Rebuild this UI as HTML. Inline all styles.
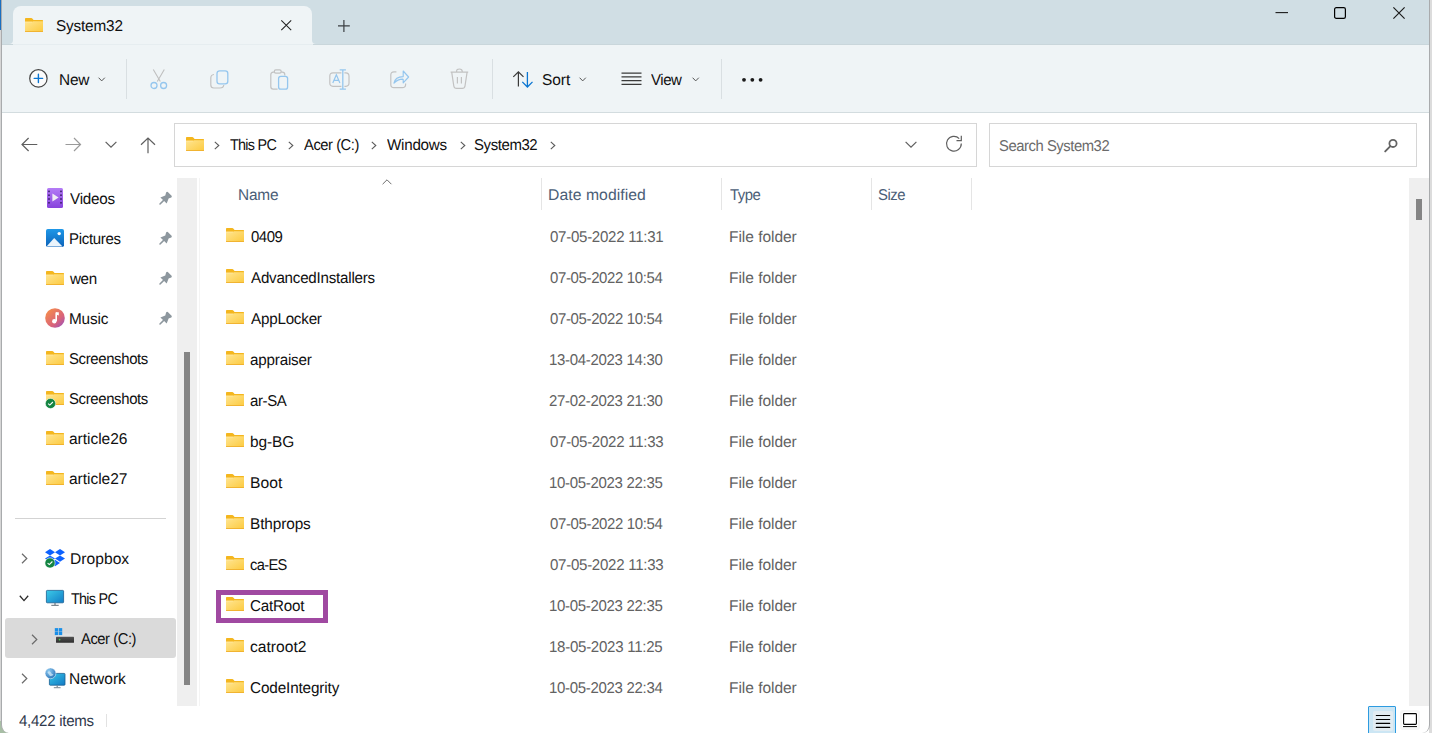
<!DOCTYPE html>
<html><head><meta charset="utf-8">
<style>
*{margin:0;padding:0;box-sizing:border-box}
html,body{width:1432px;height:733px;overflow:hidden;background:#fff}
body{position:relative;font-family:"Liberation Sans",sans-serif;font-size:15.6px;text-rendering:geometricPrecision;color:#1a1a1a}
.a{position:absolute}
.t{position:absolute;white-space:nowrap;line-height:1}
svg{position:absolute;overflow:visible}
</style></head><body>

<div class="a" style="left:0;top:0;width:2px;height:733px;background:#d6d6d6"></div>
<div class="a" style="left:1px;top:0;width:1px;height:733px;background:#a9abad"></div>
<div class="a" style="left:0;top:0;width:2px;height:30px;background:#1a6fc0"></div>
<div class="a" style="left:0;top:721px;width:8px;height:12px;background:#a8bea5"></div>
<div class="a" style="left:1429px;top:0;width:3px;height:733px;background:#dcdcdc"></div>
<div class="a" style="left:1px;top:0;width:1429px;height:733px;background:#fff;border-left:1px solid #a9abad;border-right:1px solid #a9abad;border-radius:0 0 8px 8px"></div>
<div class="a" style="left:2px;top:0;width:1427px;height:44px;background:#d0dee4"></div>
<div class="a" style="left:13px;top:6px;width:299px;height:39px;background:#eff4f6;border-radius:8px 8px 0 0"></div>
<div class="a" style="left:312px;top:40px;width:4px;height:5px;background:#eff4f6"></div>
<div class="a" style="left:312px;top:36px;width:8px;height:8px;background:#d0dee4;border-radius:4px"></div>
<div class="a" style="left:9px;top:40px;width:4px;height:5px;background:#eff4f6"></div>
<div class="a" style="left:5px;top:36px;width:8px;height:8px;background:#d0dee4;border-radius:4px"></div>
<div class="a" style="left:2px;top:44px;width:1427px;height:69px;background:#eff4f6"></div>
<div class="a" style="left:2px;top:44px;width:1427px;height:1px;background:#c9d6db"></div>
<div class="a" style="left:13px;top:44px;width:300px;height:1px;background:#e6edf0"></div>
<div class="a" style="left:2px;top:112px;width:1427px;height:1px;background:#d3dcdf"></div>
<svg style="left:25px;top:18px" width="18" height="14" viewBox="0 0 18 14" preserveAspectRatio="none"><defs><linearGradient id="g1" x1="0" y1="0" x2="1" y2="1"><stop offset="0" stop-color="#ffe591"/><stop offset="1" stop-color="#fcca3f"/></linearGradient></defs><path d="M0 0.8Q0 0 0.8 0H6.4Q6.9 0 7.3 0.4L8.6 2H17.4Q18 2 18 2.6V4.2H0Z" fill="#f4b61e"/><path d="M0 3.7H7L8.2 3.3H18V13.2Q18 14 17.2 14H0.8Q0 14 0 13.2Z" fill="url(#g1)"/><rect x="0" y="3.7" width="7" height="0.6" fill="#ffefb8" opacity="0.9"/><rect x="0" y="13" width="18" height="1" fill="#eeae2a" opacity="0.85"/></svg>
<div class="t" style="left:56.02px;top:19px;color:#101010;letter-spacing:-0.175px;transform:scaleX(0.9824);transform-origin:0 0;">System32</div>
<svg style="left:281px;top:20px" width="10.5" height="10.5" viewBox="0 0 10.5 10.5"><path d="M0.3 0.3L10.2 10.2M10.2 0.3L0.3 10.2" stroke="#222" stroke-width="1.05"/></svg>
<svg style="left:338.2px;top:20px" width="12" height="12" viewBox="0 0 12 12"><path d="M5.9 0V12M0 5.9H11.8" stroke="#3b3f42" stroke-width="1.2"/></svg>
<svg style="left:1275px;top:7px" width="14" height="12" viewBox="0 0 14 12"><path d="M0.5 5.6H13" stroke="#1a1a1a" stroke-width="1.1"/></svg>
<svg style="left:1334px;top:7px" width="12" height="12" viewBox="0 0 12 12"><rect x="0.6" y="0.6" width="10.8" height="10.8" rx="1.7" fill="none" stroke="#000" stroke-width="1.2"/></svg>
<svg style="left:1393px;top:7px" width="12" height="12" viewBox="0 0 12 12"><path d="M0.4 0.4L11.6 11.6M11.6 0.4L0.4 11.6" stroke="#1a1a1a" stroke-width="1.15"/></svg>
<svg style="left:29px;top:69px" width="19" height="19" viewBox="0 0 19 19"><circle cx="9.4" cy="9.4" r="8.7" fill="#fbfbfb" stroke="#444" stroke-width="1.2"/><path d="M9.4 5.2V13.6M5.2 9.4H13.6" stroke="#0b76d2" stroke-width="1.4" stroke-linecap="round"/></svg>
<div class="t" style="left:58.91px;top:73px;color:#101010;letter-spacing:-0.177px;transform:scaleX(0.9883);transform-origin:0 0;">New</div>
<svg style="left:97.5px;top:76.5px" width="8" height="5" viewBox="0 0 8 5"><path d="M0.6 0.7L3.7 3.9L6.8 0.7" fill="none" stroke="#555" stroke-width="1"/></svg>
<div class="a" style="left:126px;top:59px;width:1px;height:40px;background:#d9dfe2"></div>
<svg style="left:150px;top:68.5px" width="18" height="21" viewBox="0 0 18 21"><path d="M3.3 0.5L10.3 12.5M14.3 0.5L7.3 12.5" stroke="#bfbfbf" stroke-width="1.1" fill="none"/><circle cx="4" cy="16.5" r="3" fill="none" stroke="#95c6ee" stroke-width="1.3"/><circle cx="13.6" cy="16.5" r="3" fill="none" stroke="#95c6ee" stroke-width="1.3"/></svg>
<svg style="left:209.5px;top:69.5px" width="19" height="19" viewBox="0 0 19 19"><path d="M4 4.5Q0.8 4.8 0.8 8V15Q0.8 18 3.8 18H10Q13.5 18 13.8 15" fill="none" stroke="#c2c2c2" stroke-width="1.2"/><rect x="7" y="0.8" width="10.8" height="13" rx="2.6" fill="none" stroke="#95c6ee" stroke-width="1.3"/></svg>
<svg style="left:270px;top:68.5px" width="19" height="21" viewBox="0 0 19 21"><path d="M4.4 3.2H3.3Q0.8 3.2 0.8 5.8V17.6Q0.8 20.2 3.3 20.2H7.6M11.2 3.2H12.3Q14.8 3.2 14.8 5.8V6.6" fill="none" stroke="#c2c2c2" stroke-width="1.2"/><rect x="4.3" y="0.8" width="6.9" height="3.3" rx="1.6" fill="none" stroke="#c2c2c2" stroke-width="1.2"/><rect x="8.6" y="7.3" width="9" height="12.8" rx="2.2" fill="none" stroke="#95c6ee" stroke-width="1.3"/></svg>
<svg style="left:328.5px;top:68.5px" width="21" height="21" viewBox="0 0 21 21"><path d="M12.4 3.8H4Q0.8 3.8 0.8 7V14.1Q0.8 17.3 4 17.3H12.4M15.4 3.8H16.8Q20 3.8 20 7V14.1Q20 17.3 16.8 17.3H15.4" fill="none" stroke="#c2c2c2" stroke-width="1.2"/><path d="M3.8 14.1L7.35 5.8L10.9 14.1M5.1 11.3H9.6" fill="none" stroke="#95c6ee" stroke-width="1.2"/><path d="M10.7 0.8H16.9M13.8 0.8V20.2M10.7 20.2H16.9" fill="none" stroke="#95c6ee" stroke-width="1.3"/></svg>
<svg style="left:390px;top:69px" width="20" height="20" viewBox="0 0 20 20"><path d="M6.4 2.8H4Q0.8 2.8 0.8 6V15.4Q0.8 18.6 4 18.6H12.2Q15.6 18.6 15.6 15.4V14.6" fill="none" stroke="#c2c2c2" stroke-width="1.2"/><path d="M4 14.2Q5.2 7.6 13.2 7.6V2L18.6 8L13.2 13.8V10.2Q7.8 10 4 14.2Z" fill="none" stroke="#95c6ee" stroke-width="1.15" stroke-linejoin="round"/></svg>
<svg style="left:449.5px;top:68px" width="19" height="21" viewBox="0 0 19 21"><path d="M0.6 4.1H18.2M6.6 4V3.2Q6.6 1 9.4 1Q12.2 1 12.2 3.2V4M1.7 4.1L3.8 18Q4.1 20.4 6.6 20.4H12.2Q14.7 20.4 15 18L17.1 4.1M7.4 9V15.4M11.4 9V15.4" fill="none" stroke="#c2c2c2" stroke-width="1.2"/></svg>
<div class="a" style="left:492px;top:59px;width:1px;height:40px;background:#d9dfe2"></div>
<svg style="left:513px;top:70.5px" width="21" height="17" viewBox="0 0 21 17"><path d="M5.4 15.6V0.8M0.3 5.9L5.4 0.8L10.5 5.9" fill="none" stroke="#3a3a3a" stroke-width="1.2"/><path d="M14.4 0.9V16M9.3 10.9L14.4 16L19.5 10.9" fill="none" stroke="#0b76d2" stroke-width="1.3"/></svg>
<div class="t" style="left:542.01px;top:73px;color:#101010;letter-spacing:-0.067px;transform:scaleX(0.9929);transform-origin:0 0;">Sort</div>
<svg style="left:578.5px;top:76.5px" width="8" height="5" viewBox="0 0 8 5"><path d="M0.6 0.7L3.7 3.9L6.8 0.7" fill="none" stroke="#555" stroke-width="1"/></svg>
<svg style="left:620.5px;top:72px" width="21" height="14" viewBox="0 0 21 14"><path d="M0.5 1.2H20.5M0.5 4.9H20.5M0.5 8.6H20.5M0.5 12.3H20.5" stroke="#3a3a3a" stroke-width="1.3"/></svg>
<div class="t" style="left:651.40px;top:73px;color:#101010;letter-spacing:-0.451px;transform:scaleX(0.9618);transform-origin:0 0;">View</div>
<svg style="left:691.5px;top:76.5px" width="8" height="5" viewBox="0 0 8 5"><path d="M0.6 0.7L3.7 3.9L6.8 0.7" fill="none" stroke="#555" stroke-width="1"/></svg>
<div class="a" style="left:721px;top:59px;width:1px;height:40px;background:#d9dfe2"></div>
<svg style="left:742px;top:77.5px" width="21" height="4" viewBox="0 0 21 4"><circle cx="2" cy="1.8" r="1.9" fill="#1a1a1a"/><circle cx="10.3" cy="1.8" r="1.9" fill="#1a1a1a"/><circle cx="18.6" cy="1.8" r="1.9" fill="#1a1a1a"/></svg>
<svg style="left:20.5px;top:137px" width="17" height="15" viewBox="0 0 17 15"><path d="M16.3 7.5H1.2M7.6 1L1 7.5L7.6 14" fill="none" stroke="#5f5f5f" stroke-width="1.2"/></svg>
<svg style="left:65px;top:137px" width="17" height="15" viewBox="0 0 17 15"><path d="M0.5 7.5H15.5M9 1L15.5 7.5L9 14" fill="none" stroke="#9a9a9a" stroke-width="1.2"/></svg>
<svg style="left:105px;top:140.5px" width="12" height="7" viewBox="0 0 12 7"><path d="M0.6 0.8L6 6.2L11.4 0.8" fill="none" stroke="#5f5f5f" stroke-width="1.2"/></svg>
<svg style="left:139.5px;top:136.5px" width="16" height="17" viewBox="0 0 16 17"><path d="M8 16.3V1M1 7.8L8 1L15 7.8" fill="none" stroke="#5f5f5f" stroke-width="1.2"/></svg>
<div class="a" style="left:174px;top:123px;width:803px;height:44px;border:1px solid #d6d6d6;background:#fff"></div>
<svg style="left:186px;top:137px" width="18" height="14" viewBox="0 0 18 14" preserveAspectRatio="none"><defs><linearGradient id="g2" x1="0" y1="0" x2="1" y2="1"><stop offset="0" stop-color="#ffe591"/><stop offset="1" stop-color="#fcca3f"/></linearGradient></defs><path d="M0 0.8Q0 0 0.8 0H6.4Q6.9 0 7.3 0.4L8.6 2H17.4Q18 2 18 2.6V4.2H0Z" fill="#f4b61e"/><path d="M0 3.7H7L8.2 3.3H18V13.2Q18 14 17.2 14H0.8Q0 14 0 13.2Z" fill="url(#g2)"/><rect x="0" y="3.7" width="7" height="0.6" fill="#ffefb8" opacity="0.9"/><rect x="0" y="13" width="18" height="1" fill="#eeae2a" opacity="0.85"/></svg>
<svg style="left:213.5px;top:140.5px" width="6" height="9" viewBox="0 0 6 9"><path d="M0.8 0.8L4.8 4.5L0.8 8.2" fill="none" stroke="#5a5a5a" stroke-width="1.1"/></svg>
<div class="t" style="left:230.30px;top:138px;color:#101010;letter-spacing:-0.777px;transform:scaleX(0.9218);transform-origin:0 0;">This PC</div>
<svg style="left:288px;top:140.5px" width="6" height="9" viewBox="0 0 6 9"><path d="M0.8 0.8L4.8 4.5L0.8 8.2" fill="none" stroke="#5a5a5a" stroke-width="1.1"/></svg>
<div class="t" style="left:304.30px;top:138px;color:#101010;letter-spacing:-0.464px;transform:scaleX(0.9435);transform-origin:0 0;">Acer (C:)</div>
<svg style="left:371px;top:140.5px" width="6" height="9" viewBox="0 0 6 9"><path d="M0.8 0.8L4.8 4.5L0.8 8.2" fill="none" stroke="#5a5a5a" stroke-width="1.1"/></svg>
<div class="t" style="left:387.40px;top:138px;color:#101010;letter-spacing:-0.265px;transform:scaleX(0.9754);transform-origin:0 0;">Windows</div>
<svg style="left:459.5px;top:140.5px" width="6" height="9" viewBox="0 0 6 9"><path d="M0.8 0.8L4.8 4.5L0.8 8.2" fill="none" stroke="#5a5a5a" stroke-width="1.1"/></svg>
<div class="t" style="left:474.44px;top:138px;color:#101010;letter-spacing:-0.417px;transform:scaleX(0.9588);transform-origin:0 0;">System32</div>
<svg style="left:550px;top:140.5px" width="6" height="9" viewBox="0 0 6 9"><path d="M0.8 0.8L4.8 4.5L0.8 8.2" fill="none" stroke="#5a5a5a" stroke-width="1.1"/></svg>
<svg style="left:905px;top:140.5px" width="12" height="7" viewBox="0 0 12 7"><path d="M0.6 0.8L6 6.2L11.4 0.8" fill="none" stroke="#5f5f5f" stroke-width="1.2"/></svg>
<svg style="left:945px;top:135px" width="18" height="18" viewBox="0 0 18 18"><path d="M16.3 8.6A7.4 7.4 0 1 1 14.2 3.6" fill="none" stroke="#5f5f5f" stroke-width="1.2"/><path d="M16.3 0.8V5.6H11.5" fill="none" stroke="#5f5f5f" stroke-width="1.2"/></svg>
<div class="a" style="left:989px;top:123px;width:428px;height:44px;border:1px solid #d6d6d6;background:#fff"></div>
<div class="t" style="left:998.55px;top:139px;color:#6b6b6b;letter-spacing:-0.467px;transform:scaleX(0.9492);transform-origin:0 0;">Search System32</div>
<svg style="left:1383.5px;top:139px" width="14" height="14" viewBox="0 0 14 14"><circle cx="9" cy="4.4" r="3.6" fill="none" stroke="#646464" stroke-width="1.8"/><path d="M6.4 7.1L1.2 12.4" stroke="#646464" stroke-width="1.9" stroke-linecap="round"/></svg>
<div class="a" style="left:177px;top:178px;width:20px;height:528px;background:#efefef"></div>
<div class="a" style="left:184px;top:352px;width:6px;height:333px;background:#858585"></div>
<div class="a" style="left:199px;top:178px;width:1px;height:528px;background:#f4f4f4"></div>
<svg style="left:47px;top:188px" width="16" height="20" viewBox="0 0 16 20"><defs><linearGradient id="vg" x1="0" y1="0" x2="0" y2="1"><stop offset="0" stop-color="#b47cf6"/><stop offset="1" stop-color="#8743dc"/></linearGradient></defs><rect x="0" y="0" width="16" height="20" rx="1.5" fill="url(#vg)"/><g fill="#3a1f6a"><rect x="1.2" y="2.6" width="1.6" height="1.6"/><rect x="1.2" y="6.4" width="1.6" height="1.6"/><rect x="1.2" y="10.2" width="1.6" height="1.6"/><rect x="1.2" y="14" width="1.6" height="1.6"/><rect x="13.2" y="2.6" width="1.6" height="1.6"/><rect x="13.2" y="6.4" width="1.6" height="1.6"/><rect x="13.2" y="10.2" width="1.6" height="1.6"/><rect x="13.2" y="14" width="1.6" height="1.6"/></g><path d="M5.4 5.6L11.6 9.6L5.4 13.6Z" fill="#f1ecf6"/></svg>
<div class="t" style="left:70.30px;top:192px;color:#101010;letter-spacing:-0.236px;transform:scaleX(0.9755);transform-origin:0 0;">Videos</div>
<svg style="left:159px;top:191.0px" width="14" height="14" viewBox="0 0 14 14"><path d="M7.1 1.4Q7.8 0.4 8.8 0.9L12.6 4.7Q13.2 5.6 12.3 6.5L9.6 7.6L7.7 12.6L1.4 6.6L6.3 4.6Z" fill="#8d979e"/><path d="M4.4 9.6L1 13" stroke="#8d979e" stroke-width="1.5" stroke-linecap="round"/></svg>
<svg style="left:46px;top:229px" width="18" height="18" viewBox="0 0 18 18"><defs><linearGradient id="pg" x1="0" y1="0" x2="0" y2="1"><stop offset="0" stop-color="#1f98e8"/><stop offset="1" stop-color="#0c62b9"/></linearGradient></defs><rect width="18" height="18" rx="1.8" fill="url(#pg)"/><circle cx="13.2" cy="4.6" r="1.7" fill="#fff"/><path d="M0.5 17.5L8.2 9L16.5 17.5Z" fill="#eaf4fc"/></svg>
<div class="t" style="left:69.34px;top:232px;color:#101010;letter-spacing:-0.312px;transform:scaleX(0.9618);transform-origin:0 0;">Pictures</div>
<svg style="left:159px;top:231.0px" width="14" height="14" viewBox="0 0 14 14"><path d="M7.1 1.4Q7.8 0.4 8.8 0.9L12.6 4.7Q13.2 5.6 12.3 6.5L9.6 7.6L7.7 12.6L1.4 6.6L6.3 4.6Z" fill="#8d979e"/><path d="M4.4 9.6L1 13" stroke="#8d979e" stroke-width="1.5" stroke-linecap="round"/></svg>
<svg style="left:46px;top:271px" width="18" height="14" viewBox="0 0 18 14" preserveAspectRatio="none"><defs><linearGradient id="g3" x1="0" y1="0" x2="1" y2="1"><stop offset="0" stop-color="#ffe591"/><stop offset="1" stop-color="#fcca3f"/></linearGradient></defs><path d="M0 0.8Q0 0 0.8 0H6.4Q6.9 0 7.3 0.4L8.6 2H17.4Q18 2 18 2.6V4.2H0Z" fill="#f4b61e"/><path d="M0 3.7H7L8.2 3.3H18V13.2Q18 14 17.2 14H0.8Q0 14 0 13.2Z" fill="url(#g3)"/><rect x="0" y="3.7" width="7" height="0.6" fill="#ffefb8" opacity="0.9"/><rect x="0" y="13" width="18" height="1" fill="#eeae2a" opacity="0.85"/></svg>
<div class="t" style="left:70.30px;top:272px;color:#101010;letter-spacing:-0.385px;transform:scaleX(0.9732);transform-origin:0 0;">wen</div>
<svg style="left:159px;top:271.0px" width="14" height="14" viewBox="0 0 14 14"><path d="M7.1 1.4Q7.8 0.4 8.8 0.9L12.6 4.7Q13.2 5.6 12.3 6.5L9.6 7.6L7.7 12.6L1.4 6.6L6.3 4.6Z" fill="#8d979e"/><path d="M4.4 9.6L1 13" stroke="#8d979e" stroke-width="1.5" stroke-linecap="round"/></svg>
<svg style="left:45px;top:308px" width="20" height="20" viewBox="0 0 20 20"><defs><linearGradient id="mg" x1="0.1" y1="0.1" x2="0.9" y2="0.95"><stop offset="0" stop-color="#f58c4c"/><stop offset="0.65" stop-color="#d9637a"/><stop offset="1" stop-color="#9e52b8"/></linearGradient></defs><circle cx="10" cy="10" r="9.8" fill="url(#mg)"/><path d="M11.2 4.5V13" stroke="#fff" stroke-width="1.6"/><circle cx="9.3" cy="13.2" r="2.2" fill="#fff"/><path d="M11 4.2H13.8V7.4L11 6.6Z" fill="#fff"/></svg>
<div class="t" style="left:69.32px;top:312px;color:#101010;letter-spacing:-0.165px;transform:scaleX(0.9833);transform-origin:0 0;">Music</div>
<svg style="left:159px;top:311.0px" width="14" height="14" viewBox="0 0 14 14"><path d="M7.1 1.4Q7.8 0.4 8.8 0.9L12.6 4.7Q13.2 5.6 12.3 6.5L9.6 7.6L7.7 12.6L1.4 6.6L6.3 4.6Z" fill="#8d979e"/><path d="M4.4 9.6L1 13" stroke="#8d979e" stroke-width="1.5" stroke-linecap="round"/></svg>
<svg style="left:46px;top:351px" width="18" height="14" viewBox="0 0 18 14" preserveAspectRatio="none"><defs><linearGradient id="g4" x1="0" y1="0" x2="1" y2="1"><stop offset="0" stop-color="#ffe591"/><stop offset="1" stop-color="#fcca3f"/></linearGradient></defs><path d="M0 0.8Q0 0 0.8 0H6.4Q6.9 0 7.3 0.4L8.6 2H17.4Q18 2 18 2.6V4.2H0Z" fill="#f4b61e"/><path d="M0 3.7H7L8.2 3.3H18V13.2Q18 14 17.2 14H0.8Q0 14 0 13.2Z" fill="url(#g4)"/><rect x="0" y="3.7" width="7" height="0.6" fill="#ffefb8" opacity="0.9"/><rect x="0" y="13" width="18" height="1" fill="#eeae2a" opacity="0.85"/></svg>
<div class="t" style="left:69.34px;top:352px;color:#101010;letter-spacing:-0.381px;transform:scaleX(0.9571);transform-origin:0 0;">Screenshots</div>
<svg style="left:46px;top:391px" width="18" height="14" viewBox="0 0 18 14" preserveAspectRatio="none"><defs><linearGradient id="g5" x1="0" y1="0" x2="1" y2="1"><stop offset="0" stop-color="#ffe591"/><stop offset="1" stop-color="#fcca3f"/></linearGradient></defs><path d="M0 0.8Q0 0 0.8 0H6.4Q6.9 0 7.3 0.4L8.6 2H17.4Q18 2 18 2.6V4.2H0Z" fill="#f4b61e"/><path d="M0 3.7H7L8.2 3.3H18V13.2Q18 14 17.2 14H0.8Q0 14 0 13.2Z" fill="url(#g5)"/><rect x="0" y="3.7" width="7" height="0.6" fill="#ffefb8" opacity="0.9"/><rect x="0" y="13" width="18" height="1" fill="#eeae2a" opacity="0.85"/></svg>
<svg style="left:44.5px;top:397.5px" width="11" height="11" viewBox="0 0 11 11"><circle cx="5.5" cy="5.5" r="5.1" fill="#138442" stroke="#fff" stroke-width="0.5"/><path d="M3.1 5.6L4.8 7.1L7.9 4" fill="none" stroke="#fff" stroke-width="1.1"/></svg>
<div class="t" style="left:69.34px;top:392px;color:#101010;letter-spacing:-0.381px;transform:scaleX(0.9571);transform-origin:0 0;">Screenshots</div>
<svg style="left:46px;top:431px" width="18" height="14" viewBox="0 0 18 14" preserveAspectRatio="none"><defs><linearGradient id="g6" x1="0" y1="0" x2="1" y2="1"><stop offset="0" stop-color="#ffe591"/><stop offset="1" stop-color="#fcca3f"/></linearGradient></defs><path d="M0 0.8Q0 0 0.8 0H6.4Q6.9 0 7.3 0.4L8.6 2H17.4Q18 2 18 2.6V4.2H0Z" fill="#f4b61e"/><path d="M0 3.7H7L8.2 3.3H18V13.2Q18 14 17.2 14H0.8Q0 14 0 13.2Z" fill="url(#g6)"/><rect x="0" y="3.7" width="7" height="0.6" fill="#ffefb8" opacity="0.9"/><rect x="0" y="13" width="18" height="1" fill="#eeae2a" opacity="0.85"/></svg>
<div class="t" style="left:69.30px;top:432px;color:#101010;letter-spacing:-0.031px;transform:scaleX(0.9956);transform-origin:0 0;">article26</div>
<svg style="left:46px;top:471px" width="18" height="14" viewBox="0 0 18 14" preserveAspectRatio="none"><defs><linearGradient id="g7" x1="0" y1="0" x2="1" y2="1"><stop offset="0" stop-color="#ffe591"/><stop offset="1" stop-color="#fcca3f"/></linearGradient></defs><path d="M0 0.8Q0 0 0.8 0H6.4Q6.9 0 7.3 0.4L8.6 2H17.4Q18 2 18 2.6V4.2H0Z" fill="#f4b61e"/><path d="M0 3.7H7L8.2 3.3H18V13.2Q18 14 17.2 14H0.8Q0 14 0 13.2Z" fill="url(#g7)"/><rect x="0" y="3.7" width="7" height="0.6" fill="#ffefb8" opacity="0.9"/><rect x="0" y="13" width="18" height="1" fill="#eeae2a" opacity="0.85"/></svg>
<div class="t" style="left:69.30px;top:472px;color:#101010;letter-spacing:-0.031px;transform:scaleX(0.9956);transform-origin:0 0;">article27</div>
<div class="a" style="left:15px;top:518px;width:151px;height:1px;background:#d3d3d3"></div>
<svg style="left:21px;top:553px" width="7" height="11" viewBox="0 0 7 11"><path d="M1 0.8L5.8 5.5L1 10.2" fill="none" stroke="#6a6a6a" stroke-width="1.2"/></svg>
<svg style="left:45px;top:549px" width="20" height="19" viewBox="0 0 20 19"><g fill="#0d62fe"><path d="M5 0L10 3.2L5 6.4L0 3.2Z"/><path d="M15 0L20 3.2L15 6.4L10 3.2Z"/><path d="M0 9.6L5 6.4L10 9.6L5 12.8Z"/><path d="M20 9.6L15 6.4L10 9.6L15 12.8Z"/><path d="M5 14L10 10.8L15 14L10 17.2Z"/></g><circle cx="5" cy="14" r="5.1" fill="#138442" stroke="#fff" stroke-width="0.6"/><path d="M2.6 14.1L4.3 15.6L7.4 12.5" fill="none" stroke="#fff" stroke-width="1.1"/></svg>
<div class="t" style="left:69.60px;top:552px;color:#101010;letter-spacing:0.017px;transform:scaleX(1.0017);transform-origin:0 0;">Dropbox</div>
<svg style="left:18.5px;top:595px" width="10" height="7" viewBox="0 0 10 7"><path d="M0.8 0.8L5 5.6L9.2 0.8" fill="none" stroke="#2a2a2a" stroke-width="1.3"/></svg>
<svg style="left:46px;top:590px" width="18" height="17" viewBox="0 0 18 17"><defs><linearGradient id="sg" x1="0" y1="0" x2="1" y2="1"><stop offset="0" stop-color="#3ccbe8"/><stop offset="1" stop-color="#127cc6"/></linearGradient></defs><rect x="0.4" y="0.4" width="17.2" height="12.4" rx="0.8" fill="url(#sg)" stroke="#1a5f92" stroke-width="0.8"/><rect x="8.4" y="13" width="1.2" height="2" fill="#6e7a84"/><rect x="5.3" y="14.8" width="7.4" height="1.1" fill="#6e7a84"/></svg>
<div class="t" style="left:70.60px;top:592px;color:#101010;letter-spacing:-0.777px;transform:scaleX(0.9218);transform-origin:0 0;">This PC</div>
<div class="a" style="left:5px;top:618px;width:171px;height:40px;background:#dadada;border-radius:3px"></div>
<svg style="left:31px;top:634px" width="7" height="11" viewBox="0 0 7 11"><path d="M1 0.8L5.8 5.5L1 10.2" fill="none" stroke="#6a6a6a" stroke-width="1.2"/></svg>
<svg style="left:54px;top:627px" width="21" height="17" viewBox="0 0 21 17"><path d="M2 10H20L17.4 6.4H2Z" fill="#e2e2e2"/><g fill="#1a8fe8"><rect x="0.8" y="1.1" width="3.4" height="3.4"/><rect x="4.8" y="1.1" width="3.4" height="3.4"/><rect x="0.8" y="4.7" width="3.4" height="3.4"/><rect x="4.8" y="4.7" width="3.4" height="3.4"/></g><defs><linearGradient id="dg" x1="0" y1="0" x2="0" y2="1"><stop offset="0" stop-color="#525252"/><stop offset="1" stop-color="#2e2e2e"/></linearGradient></defs><rect x="2" y="9.8" width="18" height="5.9" rx="0.5" fill="url(#dg)"/><circle cx="5.6" cy="12.6" r="0.85" fill="#3fd34a"/></svg>
<div class="t" style="left:80.50px;top:632px;color:#101010;letter-spacing:-0.457px;transform:scaleX(0.9444);transform-origin:0 0;">Acer (C:)</div>
<svg style="left:21px;top:673px" width="7" height="11" viewBox="0 0 7 11"><path d="M1 0.8L5.8 5.5L1 10.2" fill="none" stroke="#6a6a6a" stroke-width="1.2"/></svg>
<svg style="left:45px;top:667px" width="21" height="22" viewBox="0 0 21 22"><defs><linearGradient id="ng" x1="0" y1="0" x2="1" y2="1"><stop offset="0" stop-color="#38c6e8"/><stop offset="1" stop-color="#1279c4"/></linearGradient><radialGradient id="gl" cx="0.35" cy="0.3" r="0.75"><stop offset="0" stop-color="#8ecbf2"/><stop offset="1" stop-color="#2c74b8"/></radialGradient></defs><rect x="4.4" y="6.4" width="15.6" height="11.8" rx="0.8" fill="url(#ng)" stroke="#1a5f92" stroke-width="0.8"/><rect x="11.6" y="18.4" width="1.2" height="2" fill="#7a8792"/><rect x="8.8" y="20.2" width="6.8" height="1" fill="#7a8792"/><circle cx="5.5" cy="6.3" r="5.4" fill="url(#gl)" stroke="#fff" stroke-width="0.5"/><path d="M2.5 5.5Q4 3.5 5.5 5Q6.5 7 8.5 7.5Q7 9.5 5 9Z" fill="#d7ecfa" opacity="0.7"/></svg>
<div class="t" style="left:69.40px;top:672px;color:#101010;letter-spacing:-0.033px;transform:scaleX(0.9964);transform-origin:0 0;">Network</div>
<div class="t" style="left:19.30px;top:714px;color:#2f3a4c;letter-spacing:-0.285px;transform:scaleX(0.9656);transform-origin:0 0;">4,422 items</div>
<div class="a" style="left:106px;top:714px;width:1px;height:13px;background:#e2e2e2"></div>
<svg style="left:382px;top:178.5px" width="10" height="6" viewBox="0 0 10 6"><path d="M0.6 5.2L5 0.8L9.4 5.2" fill="none" stroke="#6d6d6d" stroke-width="1"/></svg>
<div class="t" style="left:238.41px;top:188px;color:#4b5e77;letter-spacing:-0.169px;transform:scaleX(0.9875);transform-origin:0 0;">Name</div>
<div class="a" style="left:541px;top:178px;width:1px;height:32px;background:#e5e5e5"></div>
<div class="a" style="left:721px;top:178px;width:1px;height:32px;background:#e5e5e5"></div>
<div class="a" style="left:871px;top:178px;width:1px;height:32px;background:#e5e5e5"></div>
<div class="a" style="left:971px;top:178px;width:1px;height:32px;background:#e5e5e5"></div>
<div class="t" style="left:548.49px;top:188px;color:#4b5e77;letter-spacing:0.066px;transform:scaleX(1.0085);transform-origin:0 0;">Date modified</div>
<div class="t" style="left:729.60px;top:188px;color:#4b5e77;letter-spacing:-0.542px;transform:scaleX(0.9530);transform-origin:0 0;">Type</div>
<div class="t" style="left:878.25px;top:188px;color:#4b5e77;letter-spacing:-0.472px;transform:scaleX(0.9534);transform-origin:0 0;">Size</div>
<svg style="left:226px;top:228px" width="18" height="14" viewBox="0 0 18 14" preserveAspectRatio="none"><defs><linearGradient id="g8" x1="0" y1="0" x2="1" y2="1"><stop offset="0" stop-color="#ffe591"/><stop offset="1" stop-color="#fcca3f"/></linearGradient></defs><path d="M0 0.8Q0 0 0.8 0H6.4Q6.9 0 7.3 0.4L8.6 2H17.4Q18 2 18 2.6V4.2H0Z" fill="#f4b61e"/><path d="M0 3.7H7L8.2 3.3H18V13.2Q18 14 17.2 14H0.8Q0 14 0 13.2Z" fill="url(#g8)"/><rect x="0" y="3.7" width="7" height="0.6" fill="#ffefb8" opacity="0.9"/><rect x="0" y="13" width="18" height="1" fill="#eeae2a" opacity="0.85"/></svg>
<div class="t" style="left:250.50px;top:230px;color:#101010;letter-spacing:-0.487px;transform:scaleX(0.9588);transform-origin:0 0;">0409</div>
<div class="t" style="left:549.50px;top:230px;color:#626262;letter-spacing:-0.286px;transform:scaleX(0.9657);transform-origin:0 0;">07-05-2022 11:31</div>
<div class="t" style="left:728.61px;top:230px;color:#626262;letter-spacing:-0.035px;transform:scaleX(0.9948);transform-origin:0 0;">File folder</div>
<svg style="left:226px;top:269px" width="18" height="14" viewBox="0 0 18 14" preserveAspectRatio="none"><defs><linearGradient id="g9" x1="0" y1="0" x2="1" y2="1"><stop offset="0" stop-color="#ffe591"/><stop offset="1" stop-color="#fcca3f"/></linearGradient></defs><path d="M0 0.8Q0 0 0.8 0H6.4Q6.9 0 7.3 0.4L8.6 2H17.4Q18 2 18 2.6V4.2H0Z" fill="#f4b61e"/><path d="M0 3.7H7L8.2 3.3H18V13.2Q18 14 17.2 14H0.8Q0 14 0 13.2Z" fill="url(#g9)"/><rect x="0" y="3.7" width="7" height="0.6" fill="#ffefb8" opacity="0.9"/><rect x="0" y="13" width="18" height="1" fill="#eeae2a" opacity="0.85"/></svg>
<div class="t" style="left:250.50px;top:271px;color:#101010;letter-spacing:-0.230px;transform:scaleX(0.9710);transform-origin:0 0;">AdvancedInstallers</div>
<div class="t" style="left:549.50px;top:271px;color:#626262;letter-spacing:-0.358px;transform:scaleX(0.9581);transform-origin:0 0;">07-05-2022 10:54</div>
<div class="t" style="left:728.61px;top:271px;color:#626262;letter-spacing:-0.035px;transform:scaleX(0.9948);transform-origin:0 0;">File folder</div>
<svg style="left:226px;top:310px" width="18" height="14" viewBox="0 0 18 14" preserveAspectRatio="none"><defs><linearGradient id="g10" x1="0" y1="0" x2="1" y2="1"><stop offset="0" stop-color="#ffe591"/><stop offset="1" stop-color="#fcca3f"/></linearGradient></defs><path d="M0 0.8Q0 0 0.8 0H6.4Q6.9 0 7.3 0.4L8.6 2H17.4Q18 2 18 2.6V4.2H0Z" fill="#f4b61e"/><path d="M0 3.7H7L8.2 3.3H18V13.2Q18 14 17.2 14H0.8Q0 14 0 13.2Z" fill="url(#g10)"/><rect x="0" y="3.7" width="7" height="0.6" fill="#ffefb8" opacity="0.9"/><rect x="0" y="13" width="18" height="1" fill="#eeae2a" opacity="0.85"/></svg>
<div class="t" style="left:250.50px;top:312px;color:#101010;letter-spacing:-0.231px;transform:scaleX(0.9757);transform-origin:0 0;">AppLocker</div>
<div class="t" style="left:549.50px;top:312px;color:#626262;letter-spacing:-0.358px;transform:scaleX(0.9581);transform-origin:0 0;">07-05-2022 10:54</div>
<div class="t" style="left:728.61px;top:312px;color:#626262;letter-spacing:-0.035px;transform:scaleX(0.9948);transform-origin:0 0;">File folder</div>
<svg style="left:226px;top:351px" width="18" height="14" viewBox="0 0 18 14" preserveAspectRatio="none"><defs><linearGradient id="g11" x1="0" y1="0" x2="1" y2="1"><stop offset="0" stop-color="#ffe591"/><stop offset="1" stop-color="#fcca3f"/></linearGradient></defs><path d="M0 0.8Q0 0 0.8 0H6.4Q6.9 0 7.3 0.4L8.6 2H17.4Q18 2 18 2.6V4.2H0Z" fill="#f4b61e"/><path d="M0 3.7H7L8.2 3.3H18V13.2Q18 14 17.2 14H0.8Q0 14 0 13.2Z" fill="url(#g11)"/><rect x="0" y="3.7" width="7" height="0.6" fill="#ffefb8" opacity="0.9"/><rect x="0" y="13" width="18" height="1" fill="#eeae2a" opacity="0.85"/></svg>
<div class="t" style="left:249.53px;top:353px;color:#101010;letter-spacing:-0.205px;transform:scaleX(0.9750);transform-origin:0 0;">appraiser</div>
<div class="t" style="left:548.54px;top:353px;color:#626262;letter-spacing:-0.322px;transform:scaleX(0.9619);transform-origin:0 0;">13-04-2023 14:30</div>
<div class="t" style="left:728.61px;top:353px;color:#626262;letter-spacing:-0.035px;transform:scaleX(0.9948);transform-origin:0 0;">File folder</div>
<svg style="left:226px;top:392px" width="18" height="14" viewBox="0 0 18 14" preserveAspectRatio="none"><defs><linearGradient id="g12" x1="0" y1="0" x2="1" y2="1"><stop offset="0" stop-color="#ffe591"/><stop offset="1" stop-color="#fcca3f"/></linearGradient></defs><path d="M0 0.8Q0 0 0.8 0H6.4Q6.9 0 7.3 0.4L8.6 2H17.4Q18 2 18 2.6V4.2H0Z" fill="#f4b61e"/><path d="M0 3.7H7L8.2 3.3H18V13.2Q18 14 17.2 14H0.8Q0 14 0 13.2Z" fill="url(#g12)"/><rect x="0" y="3.7" width="7" height="0.6" fill="#ffefb8" opacity="0.9"/><rect x="0" y="13" width="18" height="1" fill="#eeae2a" opacity="0.85"/></svg>
<div class="t" style="left:249.54px;top:394px;color:#101010;letter-spacing:-0.390px;transform:scaleX(0.9615);transform-origin:0 0;">ar-SA</div>
<div class="t" style="left:548.54px;top:394px;color:#626262;letter-spacing:-0.322px;transform:scaleX(0.9619);transform-origin:0 0;">27-02-2023 21:30</div>
<div class="t" style="left:728.61px;top:394px;color:#626262;letter-spacing:-0.035px;transform:scaleX(0.9948);transform-origin:0 0;">File folder</div>
<svg style="left:226px;top:433px" width="18" height="14" viewBox="0 0 18 14" preserveAspectRatio="none"><defs><linearGradient id="g13" x1="0" y1="0" x2="1" y2="1"><stop offset="0" stop-color="#ffe591"/><stop offset="1" stop-color="#fcca3f"/></linearGradient></defs><path d="M0 0.8Q0 0 0.8 0H6.4Q6.9 0 7.3 0.4L8.6 2H17.4Q18 2 18 2.6V4.2H0Z" fill="#f4b61e"/><path d="M0 3.7H7L8.2 3.3H18V13.2Q18 14 17.2 14H0.8Q0 14 0 13.2Z" fill="url(#g13)"/><rect x="0" y="3.7" width="7" height="0.6" fill="#ffefb8" opacity="0.9"/><rect x="0" y="13" width="18" height="1" fill="#eeae2a" opacity="0.85"/></svg>
<div class="t" style="left:249.51px;top:435px;color:#101010;letter-spacing:-0.101px;transform:scaleX(0.9907);transform-origin:0 0;">bg-BG</div>
<div class="t" style="left:549.50px;top:435px;color:#626262;letter-spacing:-0.286px;transform:scaleX(0.9657);transform-origin:0 0;">07-05-2022 11:33</div>
<div class="t" style="left:728.61px;top:435px;color:#626262;letter-spacing:-0.035px;transform:scaleX(0.9948);transform-origin:0 0;">File folder</div>
<svg style="left:226px;top:474px" width="18" height="14" viewBox="0 0 18 14" preserveAspectRatio="none"><defs><linearGradient id="g14" x1="0" y1="0" x2="1" y2="1"><stop offset="0" stop-color="#ffe591"/><stop offset="1" stop-color="#fcca3f"/></linearGradient></defs><path d="M0 0.8Q0 0 0.8 0H6.4Q6.9 0 7.3 0.4L8.6 2H17.4Q18 2 18 2.6V4.2H0Z" fill="#f4b61e"/><path d="M0 3.7H7L8.2 3.3H18V13.2Q18 14 17.2 14H0.8Q0 14 0 13.2Z" fill="url(#g14)"/><rect x="0" y="3.7" width="7" height="0.6" fill="#ffefb8" opacity="0.9"/><rect x="0" y="13" width="18" height="1" fill="#eeae2a" opacity="0.85"/></svg>
<div class="t" style="left:249.50px;top:476px;color:#101010;letter-spacing:0.050px;transform:scaleX(1.0048);transform-origin:0 0;">Boot</div>
<div class="t" style="left:548.54px;top:476px;color:#626262;letter-spacing:-0.322px;transform:scaleX(0.9619);transform-origin:0 0;">10-05-2023 22:35</div>
<div class="t" style="left:728.61px;top:476px;color:#626262;letter-spacing:-0.035px;transform:scaleX(0.9948);transform-origin:0 0;">File folder</div>
<svg style="left:226px;top:515px" width="18" height="14" viewBox="0 0 18 14" preserveAspectRatio="none"><defs><linearGradient id="g15" x1="0" y1="0" x2="1" y2="1"><stop offset="0" stop-color="#ffe591"/><stop offset="1" stop-color="#fcca3f"/></linearGradient></defs><path d="M0 0.8Q0 0 0.8 0H6.4Q6.9 0 7.3 0.4L8.6 2H17.4Q18 2 18 2.6V4.2H0Z" fill="#f4b61e"/><path d="M0 3.7H7L8.2 3.3H18V13.2Q18 14 17.2 14H0.8Q0 14 0 13.2Z" fill="url(#g15)"/><rect x="0" y="3.7" width="7" height="0.6" fill="#ffefb8" opacity="0.9"/><rect x="0" y="13" width="18" height="1" fill="#eeae2a" opacity="0.85"/></svg>
<div class="t" style="left:249.51px;top:517px;color:#101010;letter-spacing:-0.116px;transform:scaleX(0.9869);transform-origin:0 0;">Bthprops</div>
<div class="t" style="left:549.50px;top:517px;color:#626262;letter-spacing:-0.358px;transform:scaleX(0.9581);transform-origin:0 0;">07-05-2022 10:54</div>
<div class="t" style="left:728.61px;top:517px;color:#626262;letter-spacing:-0.035px;transform:scaleX(0.9948);transform-origin:0 0;">File folder</div>
<svg style="left:226px;top:556px" width="18" height="14" viewBox="0 0 18 14" preserveAspectRatio="none"><defs><linearGradient id="g16" x1="0" y1="0" x2="1" y2="1"><stop offset="0" stop-color="#ffe591"/><stop offset="1" stop-color="#fcca3f"/></linearGradient></defs><path d="M0 0.8Q0 0 0.8 0H6.4Q6.9 0 7.3 0.4L8.6 2H17.4Q18 2 18 2.6V4.2H0Z" fill="#f4b61e"/><path d="M0 3.7H7L8.2 3.3H18V13.2Q18 14 17.2 14H0.8Q0 14 0 13.2Z" fill="url(#g16)"/><rect x="0" y="3.7" width="7" height="0.6" fill="#ffefb8" opacity="0.9"/><rect x="0" y="13" width="18" height="1" fill="#eeae2a" opacity="0.85"/></svg>
<div class="t" style="left:249.56px;top:558px;color:#101010;letter-spacing:-0.666px;transform:scaleX(0.9390);transform-origin:0 0;">ca-ES</div>
<div class="t" style="left:549.50px;top:558px;color:#626262;letter-spacing:-0.286px;transform:scaleX(0.9657);transform-origin:0 0;">07-05-2022 11:33</div>
<div class="t" style="left:728.61px;top:558px;color:#626262;letter-spacing:-0.035px;transform:scaleX(0.9948);transform-origin:0 0;">File folder</div>
<svg style="left:226px;top:597px" width="18" height="14" viewBox="0 0 18 14" preserveAspectRatio="none"><defs><linearGradient id="g17" x1="0" y1="0" x2="1" y2="1"><stop offset="0" stop-color="#ffe591"/><stop offset="1" stop-color="#fcca3f"/></linearGradient></defs><path d="M0 0.8Q0 0 0.8 0H6.4Q6.9 0 7.3 0.4L8.6 2H17.4Q18 2 18 2.6V4.2H0Z" fill="#f4b61e"/><path d="M0 3.7H7L8.2 3.3H18V13.2Q18 14 17.2 14H0.8Q0 14 0 13.2Z" fill="url(#g17)"/><rect x="0" y="3.7" width="7" height="0.6" fill="#ffefb8" opacity="0.9"/><rect x="0" y="13" width="18" height="1" fill="#eeae2a" opacity="0.85"/></svg>
<div class="t" style="left:249.53px;top:599px;color:#101010;letter-spacing:-0.239px;transform:scaleX(0.9750);transform-origin:0 0;">CatRoot</div>
<div class="t" style="left:548.54px;top:599px;color:#626262;letter-spacing:-0.322px;transform:scaleX(0.9619);transform-origin:0 0;">10-05-2023 22:35</div>
<div class="t" style="left:728.61px;top:599px;color:#626262;letter-spacing:-0.035px;transform:scaleX(0.9948);transform-origin:0 0;">File folder</div>
<svg style="left:226px;top:638px" width="18" height="14" viewBox="0 0 18 14" preserveAspectRatio="none"><defs><linearGradient id="g18" x1="0" y1="0" x2="1" y2="1"><stop offset="0" stop-color="#ffe591"/><stop offset="1" stop-color="#fcca3f"/></linearGradient></defs><path d="M0 0.8Q0 0 0.8 0H6.4Q6.9 0 7.3 0.4L8.6 2H17.4Q18 2 18 2.6V4.2H0Z" fill="#f4b61e"/><path d="M0 3.7H7L8.2 3.3H18V13.2Q18 14 17.2 14H0.8Q0 14 0 13.2Z" fill="url(#g18)"/><rect x="0" y="3.7" width="7" height="0.6" fill="#ffefb8" opacity="0.9"/><rect x="0" y="13" width="18" height="1" fill="#eeae2a" opacity="0.85"/></svg>
<div class="t" style="left:249.50px;top:640px;color:#101010;letter-spacing:0.007px;transform:scaleX(1.0009);transform-origin:0 0;">catroot2</div>
<div class="t" style="left:548.53px;top:640px;color:#626262;letter-spacing:-0.286px;transform:scaleX(0.9657);transform-origin:0 0;">18-05-2023 11:25</div>
<div class="t" style="left:728.61px;top:640px;color:#626262;letter-spacing:-0.035px;transform:scaleX(0.9948);transform-origin:0 0;">File folder</div>
<svg style="left:226px;top:679px" width="18" height="14" viewBox="0 0 18 14" preserveAspectRatio="none"><defs><linearGradient id="g19" x1="0" y1="0" x2="1" y2="1"><stop offset="0" stop-color="#ffe591"/><stop offset="1" stop-color="#fcca3f"/></linearGradient></defs><path d="M0 0.8Q0 0 0.8 0H6.4Q6.9 0 7.3 0.4L8.6 2H17.4Q18 2 18 2.6V4.2H0Z" fill="#f4b61e"/><path d="M0 3.7H7L8.2 3.3H18V13.2Q18 14 17.2 14H0.8Q0 14 0 13.2Z" fill="url(#g19)"/><rect x="0" y="3.7" width="7" height="0.6" fill="#ffefb8" opacity="0.9"/><rect x="0" y="13" width="18" height="1" fill="#eeae2a" opacity="0.85"/></svg>
<div class="t" style="left:249.52px;top:681px;color:#101010;letter-spacing:-0.144px;transform:scaleX(0.9815);transform-origin:0 0;">CodeIntegrity</div>
<div class="t" style="left:548.54px;top:681px;color:#626262;letter-spacing:-0.322px;transform:scaleX(0.9619);transform-origin:0 0;">10-05-2023 22:34</div>
<div class="t" style="left:728.61px;top:681px;color:#626262;letter-spacing:-0.035px;transform:scaleX(0.9948);transform-origin:0 0;">File folder</div>
<div class="a" style="left:216px;top:590px;width:112px;height:33px;border:5px solid #a049a1"></div>
<div class="a" style="left:1409px;top:178px;width:20px;height:528px;background:#efefef"></div>
<div class="a" style="left:1416px;top:199px;width:6px;height:21px;background:#858585"></div>
<div class="a" style="left:1368px;top:706px;width:28px;height:30px;background:#cce6f4;border:1px solid #2d9be0;border-radius:1px"></div>
<div class="a" style="left:1373px;top:711px;width:20px;height:20px;background:#e2ecf2;border-radius:2px"></div>
<svg style="left:1376px;top:714px" width="14" height="14" viewBox="0 0 14 14"><path d="M0.3 1.5H13.7M0.3 5.5H13.7M0.3 9.4H13.7M0.3 13.4H13.7" stroke="#000" stroke-width="1.1" stroke-linecap="round"/></svg>
<div class="a" style="left:1400px;top:710px;width:20px;height:20px;background:#f5f5f5;border-radius:3px"></div>
<div class="a" style="left:1402px;top:712px;width:16px;height:16px;background:#fdfdfd;border-radius:2px"></div>
<svg style="left:1403px;top:713px" width="14" height="14" viewBox="0 0 14 14"><rect x="0.6" y="0.6" width="12.8" height="10.8" rx="0.8" fill="#fff" stroke="#000" stroke-width="1.1"/><path d="M0.4 13.6H13.6" stroke="#000" stroke-width="1" stroke-linecap="round"/></svg>
</body></html>
